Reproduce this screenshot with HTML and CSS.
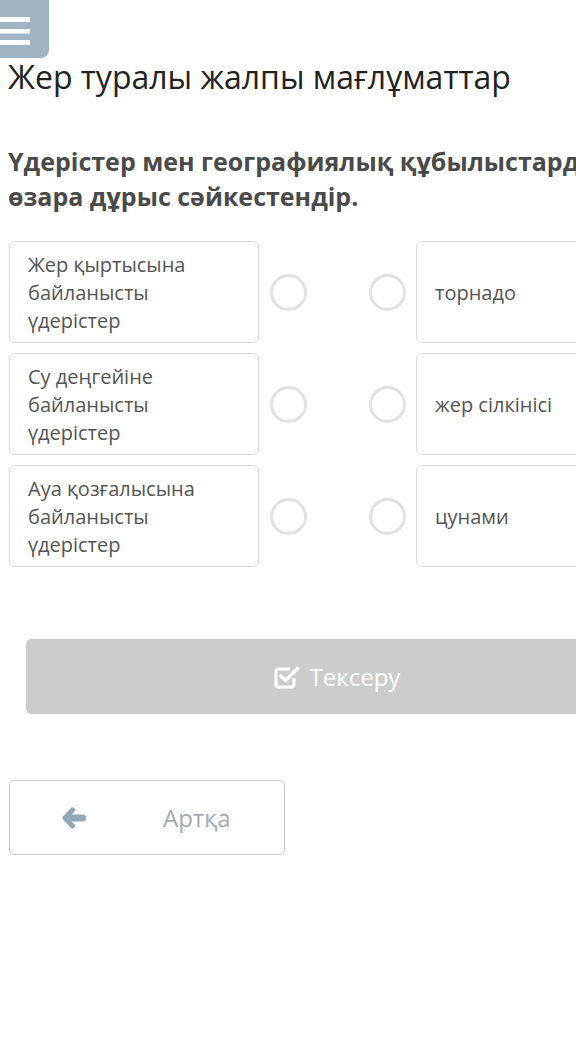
FILE: index.html
```html
<!DOCTYPE html>
<html lang="kk">
<head>
  <meta charset="UTF-8">
  <title>Жер туралы жалпы мағлұматтар</title>
  <link rel="stylesheet" href="styles.css">
</head>
<body>
  <div class="page">
    <button class="menu-btn">
      <svg width="30" height="40" viewBox="0 0 30 40">
        <rect x="0" y="8" width="30" height="5" fill="#fff"/>
        <rect x="0" y="20" width="30" height="4.5" fill="#fff"/>
        <rect x="0" y="31" width="30" height="5" fill="#fff"/>
      </svg>
    </button>

    <h1 class="title">Жер туралы жалпы мағлұматтар</h1>

    <p class="question">Үдерістер мен географиялық құбылыстарды өзара дұрыс сәйкестендір.</p>

    <div class="match">
      <div class="row">
        <div class="card">Жер қыртысына байланысты үдерістер</div>
        <span class="dot dot-left"></span>
        <span class="dot dot-right"></span>
        <div class="card">торнадо</div>
      </div>
      <div class="row">
        <div class="card">Су деңгейіне байланысты үдерістер</div>
        <span class="dot dot-left"></span>
        <span class="dot dot-right"></span>
        <div class="card">жер сілкінісі</div>
      </div>
      <div class="row">
        <div class="card">Ауа қозғалысына байланысты үдерістер</div>
        <span class="dot dot-left"></span>
        <span class="dot dot-right"></span>
        <div class="card">цунами</div>
      </div>
    </div>

    <button class="check-btn">
      <svg width="26" height="26" viewBox="0 0 26 26">
        <path d="M20 14v6.5a2.5 2.5 0 0 1-2.5 2.5h-13A2.5 2.5 0 0 1 2 20.5v-13A2.5 2.5 0 0 1 4.5 5H16" fill="none" stroke="#fff" stroke-width="3" stroke-linejoin="round"/>
        <path d="M7 12l4.5 4.5L23.5 4.5" fill="none" stroke="#fff" stroke-width="3.6" stroke-linecap="round" stroke-linejoin="round"/>
      </svg>
      <span>Тексеру</span>
    </button>

    <button class="back-btn">
      <svg width="24" height="22" viewBox="0 0 24 22">
        <path d="M10.5 3L3 11l7.5 8" fill="none" stroke="#93a7b7" stroke-width="5" stroke-linecap="round" stroke-linejoin="round"/>
        <path d="M5 11H20.5" fill="none" stroke="#93a7b7" stroke-width="7" stroke-linecap="round"/>
      </svg>
      <span>Артқа</span>
    </button>
  </div>
</body>
</html>
```

FILE: styles.css
```css
body {
  margin: 0;
  background: #fff;
  font-family: "Open Sans", "Noto Sans", sans-serif;
  overflow: hidden;
}
.page {
  width: 680px;
}
.menu-btn {
  display: block;
  width: 49px;
  height: 58px;
  padding: 0;
  border: none;
  background: #a1b4c3;
  border-radius: 0 0 8px 0;
  text-align: left;
  line-height: 0;
}
.title {
  margin: 0 0 0 8px;
  font-size: 32px;
  font-weight: 400;
  line-height: 38px;
  color: #222;
}
.question {
  width: 620px;
  margin: 48px 0 0 8px;
  font-size: 25px;
  font-weight: 700;
  line-height: 35px;
  color: #4a4a4a;
}
.match {
  margin: 27px 0 0 9px;
  display: flex;
  flex-direction: column;
  gap: 10px;
}
.row {
  display: flex;
  align-items: center;
}
.card {
  box-sizing: border-box;
  width: 250px;
  min-height: 102px;
  padding: 9px 18px 7px;
  border: 1px solid #dcdcdc;
  border-radius: 6px;
  font-size: 20px;
  line-height: 28px;
  color: #555;
  display: flex;
  align-items: center;
  align-self: stretch;
}
.dot {
  box-sizing: border-box;
  width: 37px;
  height: 37px;
  border: 3px solid #e2e2e2;
  border-radius: 50%;
}
.dot-left {
  margin-left: 11px;
}
.dot-right {
  margin-left: 62px;
  margin-right: 10px;
}
.check-btn {
  display: flex;
  align-items: center;
  justify-content: center;
  gap: 10px;
  width: 622px;
  height: 75px;
  margin: 72px 0 0 26px;
  border: none;
  border-radius: 5px;
  background: #cccccc;
  color: #fff;
  font-family: inherit;
  font-size: 24px;
}
.back-btn {
  display: flex;
  align-items: center;
  width: 276px;
  height: 75px;
  margin: 66px 0 0 9px;
  padding: 0 0 0 52px;
  box-sizing: border-box;
  border: 1px solid #c9c9c9;
  border-radius: 5px;
  background: #fff;
  color: #a2aab2;
  font-family: inherit;
  font-size: 24px;
}
.back-btn span {
  margin-left: 77px;
}
```
